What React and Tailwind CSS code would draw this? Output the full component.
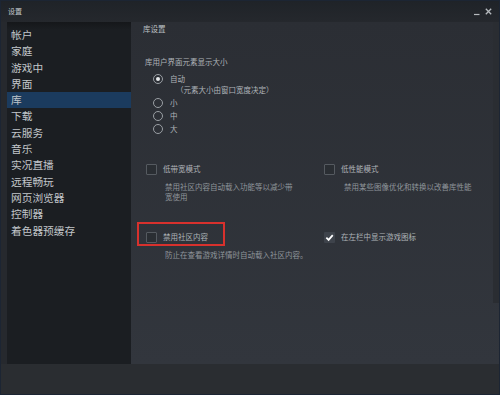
import React from 'react';

const navItems = ['帐户', '家庭', '游戏中', '界面', '库', '下载', '云服务', '音乐', '实况直播', '远程畅玩', '网页浏览器', '控制器', '着色器预缓存'];

const Radio = ({ checked, label }) => (
  <div className="flex items-center h-[13px] pl-[22px]">
    <span className="w-[10px] h-[10px] rounded-full border-[1.5px] border-[#9a9fa4] flex items-center justify-center">
      {checked && <span className="w-[4px] h-[4px] rounded-full bg-[#e8eaec]"></span>}
    </span>
    <span className="ml-[7px] text-[#aeb3b8]">{label}</span>
  </div>
);

const Checkbox = ({ checked, label }) => (
  <div className="flex items-center h-[12px]">
    {checked ? (
      <span className="w-[11px] h-[11px] bg-[#3e434b] rounded-[1px] flex items-center justify-center">
        <svg width="9" height="9" viewBox="0 0 10 10">
          <path d="M1.5 5.2 L4 7.6 L8.6 2.4" fill="none" stroke="#ffffff" strokeWidth="2" />
        </svg>
      </span>
    ) : (
      <span className="w-[11px] h-[11px] border border-[#555a60] bg-[#2a2e33] rounded-[1px]"></span>
    )}
    <span className="ml-[6px] text-[#aeb3b8]">{label}</span>
  </div>
);

const App = () => {
  return (
    <div
      className="w-[500px] h-[395px] flex flex-col bg-[#26292e] border border-[#1c2533] overflow-hidden"
      style={{ fontFamily: '"Noto Sans CJK SC", "Noto Sans", sans-serif' }}
    >
      {/* title bar */}
      <div className="h-[21px] flex items-center justify-between bg-gradient-to-b from-[#1f2328] to-[#25282d] pl-[7px] pr-[7px] shrink-0">
        <span className="text-[7px] text-[#c4c8cc]">设置</span>
        <div className="flex items-center gap-[5px]">
          <svg width="6" height="8" viewBox="0 0 6 8">
            <path d="M0 6.5 H5.5" stroke="#b6babe" strokeWidth="1.2" />
          </svg>
          <svg width="7" height="7" viewBox="0 0 7 7">
            <path d="M0.8 0.8 L6.2 6.2 M6.2 0.8 L0.8 6.2" stroke="#b6babe" strokeWidth="1.3" />
          </svg>
        </div>
      </div>

      {/* main */}
      <div className="flex h-[342px] pl-[6px] shrink-0">
        <div className="w-[124px] bg-[#1b1e22] pt-[5px] relative">
          <div className="absolute top-0 left-0 right-0 h-[8px] bg-gradient-to-b from-[#15171a] to-[#1b1e22]"></div>
          {navItems.map((item) => (
            <div
              key={item}
              className={`relative h-[16.3px] leading-[16.3px] pl-[4px] text-[10.7px] text-[#c2c6ca] ${item === '库' ? 'bg-[#1b3b5e]' : ''}`}
            >
              {item}
            </div>
          ))}
        </div>

        <div className="flex-1 flex bg-gradient-to-b from-[#2b2e34] to-[#32363d]">
          <div className="flex-1 text-[7.5px] leading-[10px]">
            <div className="mt-[2px] pl-[12px] text-[#bcc0c4]">库设置</div>

            <div className="mt-[23px] pl-[14px] text-[#aeb3b8]">库用户界面元素显示大小</div>
            <div className="mt-[5px]">
              <Radio checked label="自动" />
              <div className="pl-[45px] h-[10px] text-[#aeb3b8]">（元素大小由窗口宽度决定）</div>
              <div className="mt-[1.5px]">
                <Radio label="小" />
                <Radio label="中" />
                <Radio label="大" />
              </div>
            </div>

            <div className="grid grid-cols-[178px_1fr] pl-[15px] mt-[27.5px]">
              <div>
                <Checkbox label="低带宽模式" />
                <div className="mt-[7px] pl-[19px] w-[152px] text-[#8f959b]">禁用社区内容自动载入功能等以减少带宽使用</div>
              </div>
              <div>
                <Checkbox label="低性能模式" />
                <div className="mt-[7px] pl-[20px] w-[153px] text-[#8f959b]">禁用某些图像优化和转换以改善库性能</div>
              </div>

              <div className="mt-[29px]">
                <div className="relative">
                  <Checkbox label="禁用社区内容" />
                  <div className="absolute -left-[9px] -top-[9px] w-[88px] h-[24px] border-2 border-[#d8312d]"></div>
                </div>
                <div className="mt-[7px] pl-[19px] w-[180px] whitespace-nowrap text-[#8f959b]">防止在查看游戏详情时自动载入社区内容。</div>
              </div>
              <div className="mt-[29px]">
                <Checkbox checked label="在左栏中显示游戏图标" />
              </div>
            </div>
          </div>
          <div className="w-[6px] h-[281px] bg-[#2a2d32]"></div>
        </div>
      </div>

      {/* bottom bar */}
      <div className="flex-1 bg-[#2a2d31]"></div>
    </div>
  );
};

export default App;
